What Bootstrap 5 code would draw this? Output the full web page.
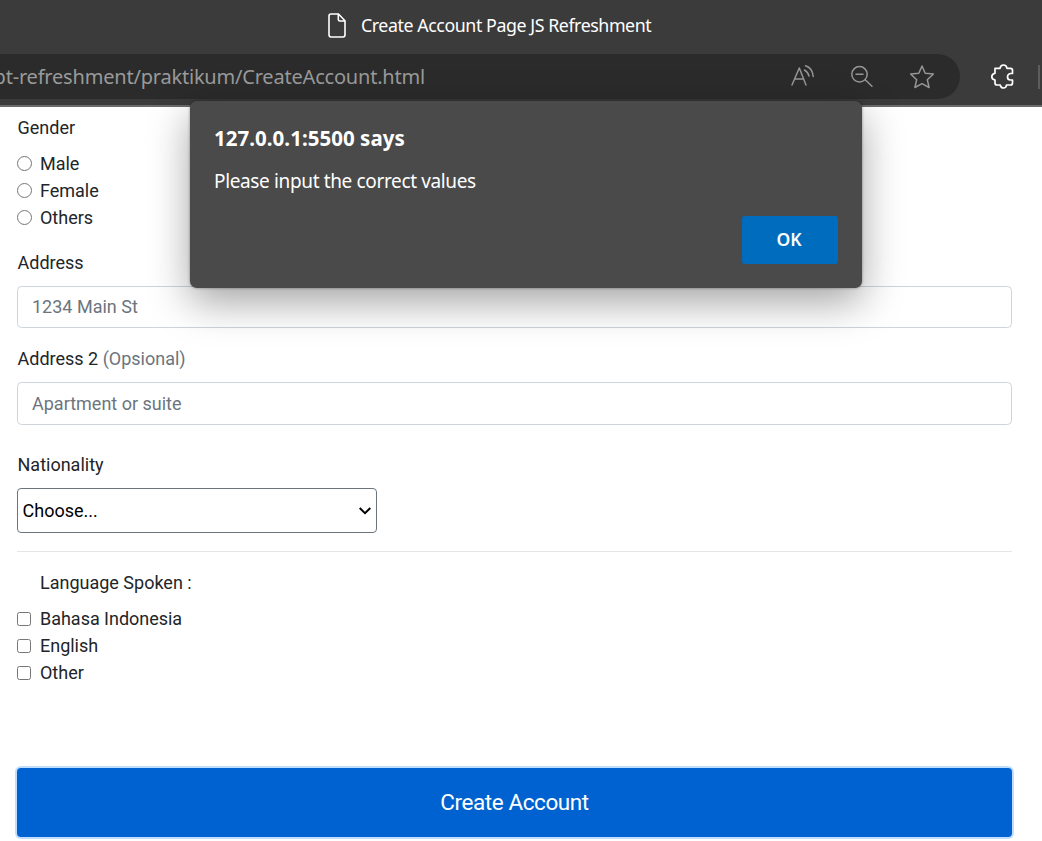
<!DOCTYPE html>
<html lang="en">
<head>
<meta charset="utf-8">
<title>Create Account Page JS Refreshment</title>
<link href="https://cdn.jsdelivr.net/npm/bootstrap@5.3.0/dist/css/bootstrap.min.css" rel="stylesheet">
<style>
body{font-family:Roboto,"Liberation Sans",sans-serif;font-size:18px;line-height:27px;color:#212529;background:#fff;height:841px;overflow:hidden}
.chrome-ui{font-family:"Noto Sans","Open Sans",sans-serif}
.browser-top{height:107px;background:#3b3b3b;border-bottom:2px solid #6b6b6b}
.tab-row{height:54px;padding-left:327px;padding-bottom:3px;color:#fff}
.tab-title{font-size:17.8px;letter-spacing:-.43px;margin-left:14px;white-space:nowrap}
.address-bar{height:45px;width:960px;background:#2b2b2b;border-radius:0 23px 23px 0;color:#9a9a9a}
.url-text{width:425px;font-size:20px;letter-spacing:-.2px;white-space:nowrap;overflow:hidden}
.bar-sep{width:2px;height:24px;background:#5d5d5d;margin-left:23px}
.page-body{padding:7px 30px 0 17px}
.form-label{margin-bottom:9px;display:block;padding-left:.5px}
.form-control{height:42px;font-size:18px;padding:0 14px;border:1px solid #ced4da;border-radius:4.5px}
.form-control::placeholder{color:#6c757d}
.option-row{height:27px;letter-spacing:-.02px}
.option-row input{width:15px;height:15px;margin:0 8px 0 0}
.option-row input[type=checkbox]{width:14px;height:14px;margin-right:9px}
.nation{width:360px;height:45px;border:1px solid #6c757d;border-radius:4px;padding:0 5px 0 4.5px;color:#000}
.divider{border-top:1px solid #e5e5e5;margin:18px 0 17px}
.btn-create{height:69px;font-size:22.5px;letter-spacing:-.42px;padding:0;background:#0062d1;border:0;border-radius:4px;box-shadow:0 0 0 2px #bfdeff;color:#fff;margin-top:82px}
.btn-create:hover{background:#0062d1;color:#fff}
.alert-box{position:absolute;left:190px;top:101px;width:672px;height:187px;background:#4a4a4a;border-radius:7px;padding:24px;color:#fff;box-shadow:0 0 3px rgba(0,0,0,.4),0 14px 40px rgba(0,0,0,.36)}
.alert-head{font-size:20.5px;font-weight:700;letter-spacing:.03px}
.alert-text{font-size:19px;margin-top:16px;letter-spacing:-.36px}
.btn-ok{width:96px;height:48px;background:#006cbe;color:#fff;border:0;border-radius:3px;font-size:17.5px;font-weight:600;padding:0 2px 2px 0;margin-top:21px}
</style>
</head>
<body>
<header class="browser-top chrome-ui">
  <div class="tab-row d-flex align-items-center">
    <svg width="20" height="26" viewBox="0 0 20 26" fill="none" stroke="#fff" stroke-width="1.6"><path d="M3.5 1H11.5L18 7.8V21.5Q18 24 16 24H4Q2 24 2 21.5V3Q2 1 4 1ZM11.3 1V6.5Q11.3 8 13 8H18"/></svg>
    <span class="tab-title">Create Account Page JS Refreshment</span>
  </div>
  <div class="d-flex align-items-center">
    <div class="address-bar d-flex align-items-center flex-shrink-0">
      <div class="url-text d-flex justify-content-end flex-shrink-0"><span>pt-refreshment/praktikum/CreateAccount.html</span></div>
      <svg width="535" height="45" viewBox="425 54 535 45" fill="none" stroke="#969696" stroke-width="1.5" stroke-linecap="round" stroke-linejoin="round">
        <path d="M792 85L799.3 68L806 85M794.6 79H803.5M804.5 70Q808 72 809 76M805.5 65.8Q812.5 68 813.2 76.5"/>
        <circle cx="859.5" cy="74.3" r="7.7"/><path d="M856 74.3H863M865.2 79.8L872 86.3"/>
        <path d="M922 66L925.2 73.3L933.4 74L927.3 79.7L929.1 87.5L922 83.7L914.9 87.5L916.7 79.7L910.6 74L918.8 73.3Z"/>
      </svg>
    </div>
    <svg class="flex-shrink-0" style="margin-left:30px" width="25" height="28" viewBox="990 63 25 28" fill="none" stroke="#fff" stroke-width="1.7" stroke-linejoin="round"><path d="M995 68.3H1000Q1000.5 65 1003.5 65T1007 68.3H1010.5Q1012.5 68.3 1012.5 70.3V73.5H1010.5Q1007.5 74 1007.5 77T1010.5 80H1012.5V83Q1012.5 85 1010.5 85H1006.5Q1006.2 88 1003.5 88T1000.2 85H997Q995 85 995 83V80Q991.8 79.3 991.8 76.7T995 73.3Z"/></svg>
    <div class="bar-sep"></div>
  </div>
</header>

<main class="page-body">
  <form onsubmit="return false">
    <label class="form-label">Gender</label>
    <label class="option-row d-flex align-items-center"><input type="radio" name="gender">Male</label>
    <label class="option-row d-flex align-items-center"><input type="radio" name="gender">Female</label>
    <label class="option-row d-flex align-items-center"><input type="radio" name="gender">Others</label>
    <label class="form-label" style="margin-top:18px;margin-bottom:10px" for="addr">Address</label>
    <input class="form-control" style="padding-bottom:2px" id="addr" placeholder="1234 Main St">
    <label class="form-label" style="margin-top:17px;margin-bottom:10px" for="addr2">Address 2 <span style="color:#6c757d">(Opsional)</span></label>
    <input class="form-control" style="height:43px" id="addr2" placeholder="Apartment or suite">
    <label class="form-label" style="margin-top:26px;margin-bottom:10px">Nationality</label>
    <div class="nation d-flex align-items-center justify-content-between" role="combobox"><span>Choose...</span>
      <svg width="12" height="8" viewBox="0 0 12 8" fill="none" stroke="#000" stroke-width="2"><path d="M.7 1L6 6.2L11.3 1"/></svg></div>
    <div class="divider"></div>
    <div style="margin:0 0 9px 23px">Language Spoken :</div>
    <label class="option-row d-flex align-items-center"><input type="checkbox">Bahasa Indonesia</label>
    <label class="option-row d-flex align-items-center"><input type="checkbox">English</label>
    <label class="option-row d-flex align-items-center"><input type="checkbox">Other</label>
    <button class="btn btn-create w-100" type="button">Create Account</button>
  </form>
</main>

<section class="alert-box chrome-ui" role="alertdialog">
  <div class="alert-head">127.0.0.1:5500 says</div>
  <div class="alert-text">Please input the correct values</div>
  <div class="d-flex justify-content-end"><button class="btn btn-ok" type="button">OK</button></div>
</section>
<script src="https://cdn.jsdelivr.net/npm/bootstrap@5.3.0/dist/js/bootstrap.bundle.min.js"></script>
</body>
</html>
